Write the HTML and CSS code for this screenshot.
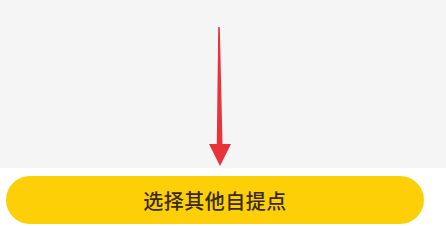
FILE: index.html
```html
<!DOCTYPE html>
<html lang="zh-CN">
<head>
    <meta charset="UTF-8">
    <meta name="viewport" content="width=device-width, initial-scale=1.0">
    <title>选择其他自提点</title>
    <link rel="stylesheet" href="styles.css">
</head>
<body>
    <div class="page">
        <div class="content">
            <!-- annotation arrow pointing at the button -->
            <svg class="hint-arrow" width="26" height="142" viewBox="0 0 26 142">
                <path d="M11.2 0 L12.8 0 L15.5 117 L24 117 L13 139 L2 117 L9.8 117 Z" fill="#e8333b"/>
            </svg>
        </div>
        <div class="footer">
            <button class="pick-btn">选择其他自提点</button>
        </div>
    </div>
</body>
</html>
```

FILE: styles.css
```css
body {
    margin: 0;
    background-color: #ffffff;
    font-family: 'Noto Sans CJK SC', 'Noto Sans', sans-serif;
}

.page {
    width: 446px;
    height: 226px;
    display: flex;
    flex-direction: column;
}

.content {
    position: relative;
    height: 168px;
    background-color: #f5f5f5;
}

.hint-arrow {
    position: absolute;
    left: 207px;
    top: 27px;
}

.footer {
    flex: 1;
    padding: 8px 22px 2px 6px;
}

.pick-btn {
    width: 100%;
    height: 48px;
    border: none;
    border-radius: 24px;
    background-color: #fccf06;
    color: #3a2a0c;
    font-family: inherit;
    font-size: 20px;
    font-weight: 500;
    letter-spacing: 0.5px;
    padding: 0;
}
```
